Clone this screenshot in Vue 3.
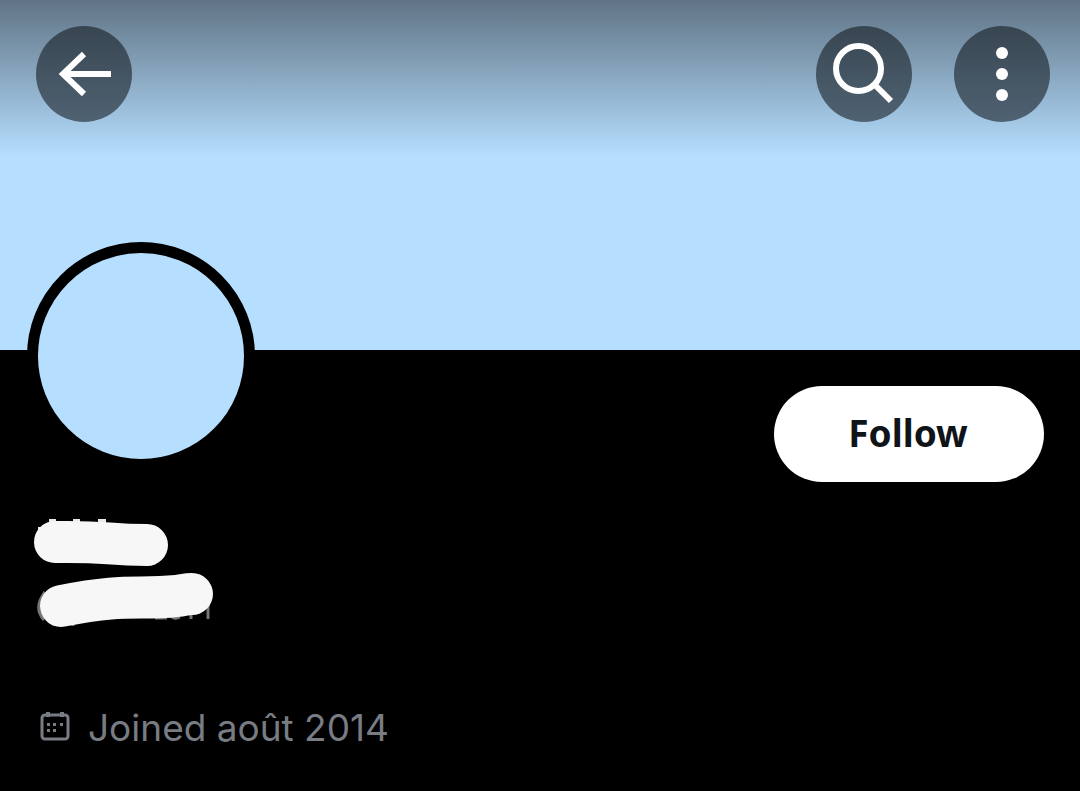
<script setup>
const joined = 'Joined août 2014'
</script>

<template>
  <main class="profile">
    <header class="banner">
      <nav class="bar" aria-label="Profile actions">
        <button class="round" type="button" aria-label="Back">
          <svg viewBox="0 0 96 96" fill="none" stroke="#fff" stroke-width="6">
            <path d="M75 48H27M48 28L27 48L48 68" />
          </svg>
        </button>
        <span class="spacer"></span>
        <button class="round" type="button" aria-label="Search">
          <svg viewBox="0 0 96 96" fill="none" stroke="#fff" stroke-width="6">
            <circle cx="42.5" cy="42.5" r="22.5" />
            <path d="M59 59L75 75" />
          </svg>
        </button>
        <button class="round" type="button" aria-label="More options">
          <svg viewBox="0 0 96 96" fill="#fff">
            <circle cx="48" cy="27" r="6" />
            <circle cx="48" cy="48" r="6" />
            <circle cx="48" cy="69" r="6" />
          </svg>
        </button>
      </nav>
    </header>
    <section class="details">
      <div class="top">
        <div class="avatar" role="img" aria-label="Profile picture"></div>
        <button class="follow" type="button">Follow</button>
      </div>
      <svg class="marker" viewBox="0 0 190 120" aria-hidden="true">
        <path fill="#e7e9ea" d="M19 7h7v4h-7zM43 7h7v4h-7zM68 7h8v4h-8zM8 15h4v4h-4z" />
        <g fill="none" stroke="#71767b" stroke-width="3">
          <path d="M15 80Q3 96 14 108M43 107v7M125 106h12M140 103q4 5 10 2M161 98v9M178 92v15" />
        </g>
        <g fill="none" stroke="#f7f7f7" stroke-width="42" stroke-linecap="round">
          <path d="M25 30C78 29 75 33 117 33" />
          <path d="M31 94C98 81 104 88 147 84C154 83 157 82 162 82" />
        </g>
      </svg>
      <p class="joined">
        <svg viewBox="0 0 30 30" aria-hidden="true">
          <rect x="2" y="4" width="26" height="24" rx="3" fill="none" stroke="#787c83" stroke-width="3" />
          <path fill="#787c83" d="M6 1h4v5H6zM20 1h4v5h-4zM7 12h3v3H7zM13 12h3v3h-3zM20 12h3v3h-3zM7 18h3v3H7zM13 18h3v3h-3z" />
        </svg>
        <span>{{ joined }}</span>
      </p>
    </section>
  </main>
</template>

<style>
body {
  margin: 0;
  background: #000;
}
</style>

<style scoped>
.profile {
  min-height: 100vh;
  background: #000;
}
.banner {
  height: 350px;
  background: linear-gradient(#607485 0, #b5deff 156px);
}
.bar {
  display: flex;
  gap: 42px;
  padding: 26px 30px 0 36px;
}
.spacer {
  flex: 1;
}
.round {
  width: 96px;
  height: 96px;
  padding: 0;
  border: 0;
  border-radius: 50%;
  background: rgba(15, 20, 25, 0.56);
}
.round svg {
  display: block;
}
.details {
  padding: 0 36px 32px 27px;
}
.top {
  display: flex;
  justify-content: space-between;
  align-items: flex-start;
}
.avatar {
  width: 206px;
  height: 206px;
  margin-top: -108px;
  border: 11px solid #000;
  border-radius: 50%;
  background: #b5deff;
}
.follow {
  width: 270px;
  height: 96px;
  margin-top: 36px;
  padding: 0 2px 4px 0;
  border: 0;
  border-radius: 48px;
  background: #fff;
  color: #0f1419;
  font: 700 37px "Noto Sans", sans-serif;
}
.marker {
  display: block;
  width: 190px;
  height: 120px;
  margin: 30px 0 0 3px;
}
.joined {
  display: flex;
  align-items: flex-start;
  gap: 18px;
  margin: 68px 0 0 13px;
  color: #787c83;
  font: 400 37px/56px Inter, sans-serif;
}
.joined svg {
  width: 30px;
  height: 30px;
  margin-top: 11px;
}
</style>
